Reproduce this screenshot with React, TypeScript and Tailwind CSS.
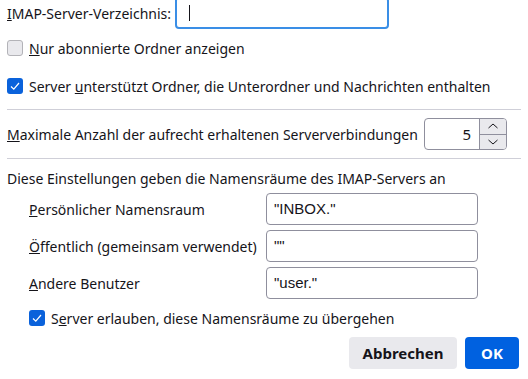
import React from "react";

function Check({ checked }: { checked?: boolean }) {
  return checked ? (
    <span className="w-[16px] h-[16px] rounded-[3px] bg-[#0a62db] flex items-center justify-center shrink-0">
      <svg width="12" height="12" viewBox="0 0 12 12" fill="none">
        <path d="M2 6.5 L4.8 9.2 L10 3" stroke="white" strokeWidth="1.2" />
      </svg>
    </span>
  ) : (
    <span className="w-[16px] h-[16px] rounded-[3px] bg-[#e9e9ed] border border-[#b3b3b8] shrink-0" />
  );
}

function TextBox({ value }: { value: string }) {
  return (
    <div className="h-[32px] w-[212px] border border-[#8f8f9d] rounded-[4px] flex items-center pl-[7px] font-['Liberation_Sans',sans-serif] text-[15px]">
      {value}
    </div>
  );
}

export default function App() {
  return (
    <div className="w-[528px] h-[379px] overflow-hidden bg-white text-[#15141a] font-['Noto_Sans',sans-serif] text-[14px] whitespace-nowrap px-[7px] flex flex-col">
      {/* Verzeichnis */}
      <div className="flex items-center h-[32px] mt-[-3px] shrink-0">
        <span>
          <u>I</u>MAP-Server-Verzeichnis:
        </span>
        <div className="ml-[4px] w-[214px] h-[32px] border-2 border-[#3a8ee6] rounded-[4px] flex items-center pl-[12px]">
          <span className="w-px h-[16px] bg-[#15141a]" />
        </div>
      </div>

      <div className="flex items-center gap-[6px] mt-[11px] h-[16px] shrink-0">
        <Check />
        <span>
          <u>N</u>ur abonnierte Ordner anzeigen
        </span>
      </div>

      <div className="flex items-center gap-[6px] mt-[22px] h-[16px] shrink-0">
        <Check checked />
        <span>
          Server <u>u</u>nterstützt Ordner, die Unterordner und Nachrichten enthalten
        </span>
      </div>

      <div className="mt-[15px] h-px bg-[#cfcfd8] shrink-0" />

      {/* Verbindungen */}
      <div className="flex items-center h-[32px] mt-[8px] shrink-0">
        <span>
          <u>M</u>aximale Anzahl der aufrecht erhaltenen Serververbindungen
        </span>
        <div className="ml-auto mr-[14px] w-[83px] h-[32px] border border-[#8f8f9d] rounded-[4px] flex overflow-hidden">
          <div className="flex-1 flex items-center justify-end pr-[8px] text-[15px]">5</div>
          <div className="w-[27px] flex flex-col border-l border-[#8f8f9d]">
            <div className="flex-1 bg-[#e9e9ed] flex items-center justify-center border-b border-[#8f8f9d]">
              <svg width="12" height="8" viewBox="0 0 12 8" fill="none">
                <path d="M1.5 6 L6 2 L10.5 6" stroke="#15141a" strokeWidth="1" />
              </svg>
            </div>
            <div className="flex-1 bg-[#e9e9ed] flex items-center justify-center">
              <svg width="12" height="8" viewBox="0 0 12 8" fill="none">
                <path d="M1.5 2 L6 6 L10.5 2" stroke="#15141a" strokeWidth="1" />
              </svg>
            </div>
          </div>
        </div>
      </div>

      <div className="mt-[8px] h-px bg-[#cfcfd8] shrink-0" />

      {/* Namensräume */}
      <div className="mt-[10px] h-[20px] leading-[20px] shrink-0">
        Diese Einstellungen geben die Namensräume des IMAP-Servers an
      </div>

      <div className="mt-[4px] pl-[22px] grid grid-cols-[237px_212px] gap-y-[5px] items-center shrink-0">
        <span>
          <u>P</u>ersönlicher Namensraum
        </span>
        <TextBox value={'"INBOX."'} />
        <span>
          <u>Ö</u>ffentlich (gemeinsam verwendet)
        </span>
        <TextBox value={'""'} />
        <span>
          <u>A</u>ndere Benutzer
        </span>
        <TextBox value={'"user."'} />
      </div>

      <div className="flex items-center gap-[6px] mt-[11px] ml-[22px] h-[16px] shrink-0">
        <Check checked />
        <span>
          S<u>e</u>rver erlauben, diese Namensräume zu übergehen
        </span>
      </div>

      <div className="flex justify-end gap-[8px] mt-[11px] mr-[2px] shrink-0">
        <button className="h-[32px] w-[108px] rounded-[4px] bg-[#e9e9ed] font-bold text-[15px]">
          Abbrechen
        </button>
        <button className="h-[32px] w-[54px] rounded-[4px] bg-[#0061e0] text-white font-bold text-[15px]">
          OK
        </button>
      </div>
    </div>
  );
}
